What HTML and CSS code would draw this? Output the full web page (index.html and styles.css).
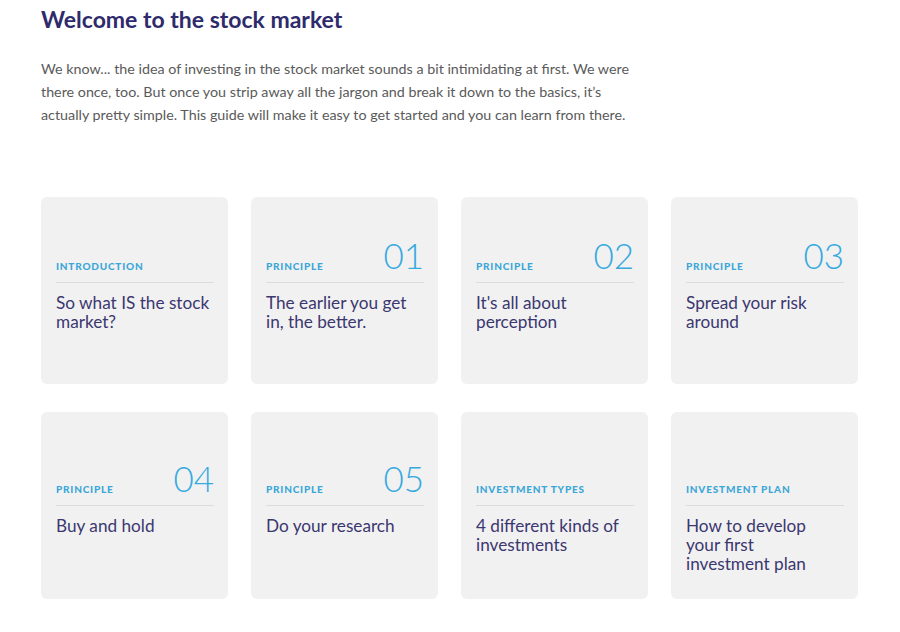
FILE: index.html
```html
<!DOCTYPE html>
<html lang="en">
<head>
    <meta charset="UTF-8">
    <meta name="viewport" content="width=device-width, initial-scale=1.0">
    <title>Welcome to the stock market</title>
    <link rel="stylesheet" href="styles.css">
</head>
<body>
    <main class="guide">
        <h1 class="guide-title">Welcome to the stock market</h1>
        <p class="guide-intro">We know... the idea of investing in the stock market sounds a bit intimidating at first. We were there once, too. But once you strip away all the jargon and break it down to the basics, it’s actually pretty simple. This guide will make it easy to get started and you can learn from there.</p>

        <div class="cards">
            <a href="#" class="card">
                <div class="card-head">
                    <span class="card-label">Introduction</span>
                </div>
                <h3 class="card-title">So what IS the stock market?</h3>
            </a>
            <a href="#" class="card">
                <div class="card-head">
                    <span class="card-label">Principle</span>
                    <span class="card-number">01</span>
                </div>
                <h3 class="card-title">The earlier you get in, the better.</h3>
            </a>
            <a href="#" class="card">
                <div class="card-head">
                    <span class="card-label">Principle</span>
                    <span class="card-number">02</span>
                </div>
                <h3 class="card-title">It's all about perception</h3>
            </a>
            <a href="#" class="card">
                <div class="card-head">
                    <span class="card-label">Principle</span>
                    <span class="card-number">03</span>
                </div>
                <h3 class="card-title">Spread your risk around</h3>
            </a>

            <a href="#" class="card card-low">
                <div class="card-head">
                    <span class="card-label">Principle</span>
                    <span class="card-number">04</span>
                </div>
                <h3 class="card-title">Buy and hold</h3>
            </a>
            <a href="#" class="card card-low">
                <div class="card-head">
                    <span class="card-label">Principle</span>
                    <span class="card-number">05</span>
                </div>
                <h3 class="card-title">Do your research</h3>
            </a>
            <a href="#" class="card card-low">
                <div class="card-head">
                    <span class="card-label">Investment types</span>
                </div>
                <h3 class="card-title">4 different kinds of investments</h3>
            </a>
            <a href="#" class="card card-low">
                <div class="card-head">
                    <span class="card-label">Investment plan</span>
                </div>
                <h3 class="card-title">How to develop your first investment plan</h3>
            </a>
        </div>
    </main>
</body>
</html>
```

FILE: styles.css
```css
* {
    margin: 0;
    padding: 0;
    box-sizing: border-box;
    font-family: 'Lato', 'Open Sans', sans-serif;
}

body {
    background-color: white;
}

.guide {
    padding: 5px 0 0 41px;
    width: 858px;
}

.guide-title {
    font-size: 23px;
    line-height: 28px;
    font-weight: bold;
    color: #2e2a6b;
}

.guide-intro {
    margin-top: 24px;
    width: 596px;
    font-size: 14.3px;
    line-height: 23px;
    color: #5a5a5a;
}

.cards {
    margin-top: 71px;
    display: grid;
    grid-template-columns: repeat(4, 187px);
    column-gap: 23px;
    row-gap: 28px;
}

.card {
    display: block;
    height: 187px;
    padding: 42px 14px 0 15px;
    background-color: #f1f1f2;
    border-radius: 6px;
    text-decoration: none;
}

.card-low {
    padding-top: 50px;
}

.card-head {
    display: flex;
    justify-content: space-between;
    align-items: flex-end;
    height: 44px;
    padding-bottom: 8px;
    border-bottom: 1px solid #dcdcdc;
}

.card-label {
    padding-bottom: 2px;
    font-size: 10px;
    line-height: 12px;
    font-weight: 900;
    letter-spacing: 0.8px;
    text-transform: uppercase;
    color: #3ba7d8;
}

.card-number {
    margin-bottom: 2px;
    font-size: 35px;
    line-height: 34px;
    font-weight: 300;
    color: #36aadf;
}

.card-title {
    margin-top: 10px;
    padding-right: 3px;
    font-size: 17.2px;
    line-height: 19px;
    font-weight: normal;
    color: #3b376f;
}
```
